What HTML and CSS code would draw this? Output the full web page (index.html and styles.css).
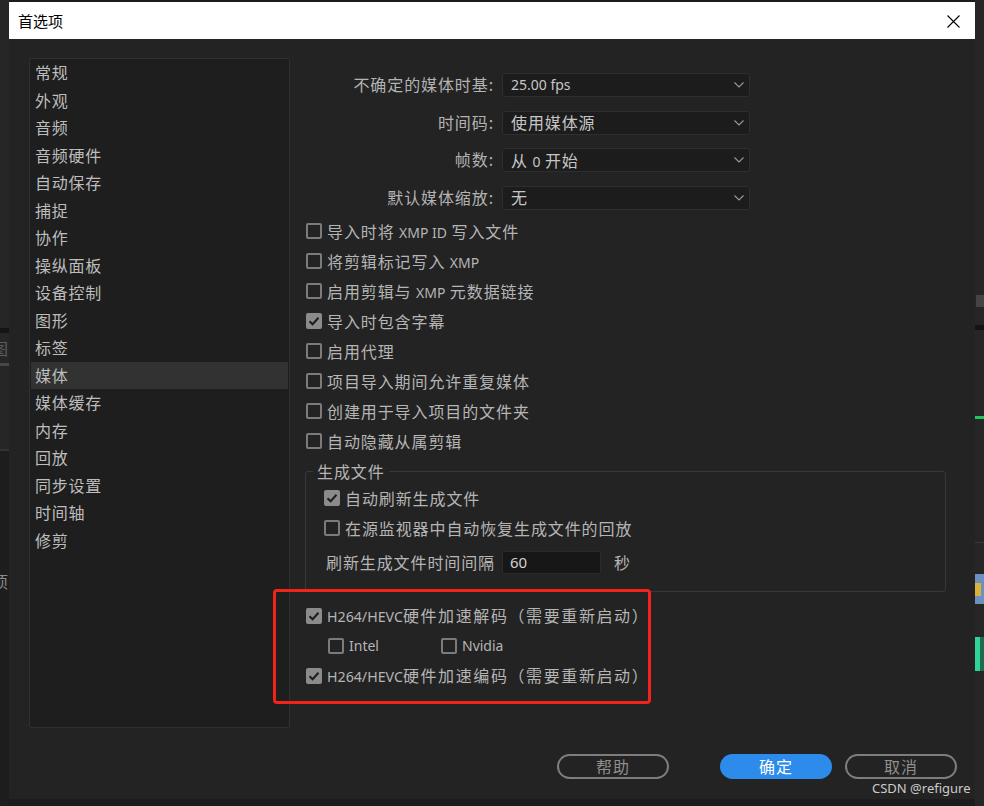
FILE: index.html
```html
<!DOCTYPE html>
<html>
<head>
<meta charset="utf-8">
<title>首选项</title>
<link rel="stylesheet" href="styles.css">
</head>
<body>
<div class="screen">
  <div class="strip strip-left">
    <div class="sp" style="height:328px"></div>
    <div class="band-dark"></div>
    <div class="sp glyph-row">图</div>
    <div class="line-gray"></div>
    <div class="sp" style="height:83px"></div>
    <div class="line-mid"></div>
    <div class="sp dark-area glyph-row2">项</div>
  </div>

  <div class="dialog">
    <div class="titlebar">
      <span class="title">首选项</span>
      <svg class="close" width="13" height="13" viewBox="0 0 13 13"><path d="M0.5 0.5 L12.5 12.5 M12.5 0.5 L0.5 12.5" stroke="#000" stroke-width="1.1" fill="none"/></svg>
    </div>
    <div class="dbody">
      <div class="main">
        <ul class="cats">
          <li>常规</li>
          <li>外观</li>
          <li>音频</li>
          <li>音频硬件</li>
          <li>自动保存</li>
          <li>捕捉</li>
          <li>协作</li>
          <li>操纵面板</li>
          <li>设备控制</li>
          <li>图形</li>
          <li>标签</li>
          <li class="sel">媒体</li>
          <li>媒体缓存</li>
          <li>内存</li>
          <li>回放</li>
          <li>同步设置</li>
          <li>时间轴</li>
          <li>修剪</li>
        </ul>

        <div class="pane">
          <div class="selects">
            <label>不确定的媒体时基:</label>
            <div class="select"><span class="en">25.00 fps</span><svg class="chev" width="10" height="6" viewBox="0 0 10 6"><path d="M0.5 0.5 L5 5 L9.5 0.5" stroke="#9a9a9a" stroke-width="1.1" fill="none"/></svg></div>
            <label>时间码:</label>
            <div class="select"><span>使用媒体源</span><svg class="chev" width="10" height="6" viewBox="0 0 10 6"><path d="M0.5 0.5 L5 5 L9.5 0.5" stroke="#9a9a9a" stroke-width="1.1" fill="none"/></svg></div>
            <label>帧数:</label>
            <div class="select"><span>从 <span class="en">0</span> 开始</span><svg class="chev" width="10" height="6" viewBox="0 0 10 6"><path d="M0.5 0.5 L5 5 L9.5 0.5" stroke="#9a9a9a" stroke-width="1.1" fill="none"/></svg></div>
            <label>默认媒体缩放:</label>
            <div class="select"><span>无</span><svg class="chev" width="10" height="6" viewBox="0 0 10 6"><path d="M0.5 0.5 L5 5 L9.5 0.5" stroke="#9a9a9a" stroke-width="1.1" fill="none"/></svg></div>
          </div>

          <div class="checks">
            <div class="row"><span class="cb"></span><span>导入时将 <span class="en">XMP ID</span> 写入文件</span></div>
            <div class="row"><span class="cb"></span><span>将剪辑标记写入 <span class="en">XMP</span></span></div>
            <div class="row"><span class="cb"></span><span>启用剪辑与 <span class="en">XMP</span> 元数据链接</span></div>
            <div class="row"><span class="cb on"><svg width="12" height="12" viewBox="0 0 12 12"><path d="M1.5 6.2 L4.6 9.2 L10.5 2.8" stroke="#1d1d1d" stroke-width="2" fill="none"/></svg></span><span>导入时包含字幕</span></div>
            <div class="row"><span class="cb"></span><span>启用代理</span></div>
            <div class="row"><span class="cb"></span><span>项目导入期间允许重复媒体</span></div>
            <div class="row"><span class="cb"></span><span>创建用于导入项目的文件夹</span></div>
            <div class="row"><span class="cb"></span><span>自动隐藏从属剪辑</span></div>
          </div>

          <fieldset class="group">
            <legend>生成文件</legend>
            <div class="row"><span class="cb on"><svg width="12" height="12" viewBox="0 0 12 12"><path d="M1.5 6.2 L4.6 9.2 L10.5 2.8" stroke="#1d1d1d" stroke-width="2" fill="none"/></svg></span><span>自动刷新生成文件</span></div>
            <div class="row"><span class="cb"></span><span>在源监视器中自动恢复生成文件的回放</span></div>
            <div class="interval">
              <span class="ilabel">刷新生成文件时间间隔</span>
              <span class="num en">60</span>
              <span class="unit">秒</span>
            </div>
          </fieldset>

          <div class="hw">
            <div class="row"><span class="cb on"><svg width="12" height="12" viewBox="0 0 12 12"><path d="M1.5 6.2 L4.6 9.2 L10.5 2.8" stroke="#1d1d1d" stroke-width="2" fill="none"/></svg></span><span><span class="en big">H264/HEVC</span><span class="wide">硬件加速解码（需要重新启动）</span></span></div>
            <div class="row sub">
              <span class="opt"><span class="cb"></span><span class="en">Intel</span></span>
              <span class="opt"><span class="cb"></span><span class="en">Nvidia</span></span>
            </div>
            <div class="row"><span class="cb on"><svg width="12" height="12" viewBox="0 0 12 12"><path d="M1.5 6.2 L4.6 9.2 L10.5 2.8" stroke="#1d1d1d" stroke-width="2" fill="none"/></svg></span><span><span class="en big">H264/HEVC</span><span class="wide">硬件加速编码（需要重新启动）</span></span></div>
          </div>
        </div>
      </div>

      <div class="footer">
        <button class="btn help">帮助</button>
        <button class="btn primary">确定</button>
        <button class="btn">取消</button>
      </div>
    </div>
  </div>

  <div class="strip strip-right">
    <div class="sp" style="height:295px"></div>
    <div class="r-gray"></div>
    <div class="sp" style="height:18px"></div>
    <div class="band-dark"></div>
    <div class="sp" style="height:86px"></div>
    <div class="r-green"></div>
    <div class="sp" style="height:123px"></div>
    <div class="r-line"></div>
    <div class="sp" style="height:31px"></div>
    <div class="r-blue"><span class="r-yellow"></span></div>
    <div class="sp" style="height:33px"></div>
    <div class="r-teal"></div>
  </div>
</div>

<div class="annot"></div>
<div class="watermark">CSDN @refigure</div>
</body>
</html>
```

FILE: styles.css
```css
* { box-sizing: border-box; }

body {
  margin: 0;
  width: 984px;
  height: 806px;
  overflow: hidden;
  position: relative;
  background: #1c1c1c;
  font-family: "Noto Sans CJK SC", "Noto Sans", sans-serif;
}

.screen {
  display: flex;
  height: 806px;
}

/* background application strips */
.strip {
  width: 9px;
  flex: none;
  display: flex;
  flex-direction: column;
  overflow: hidden;
}
.strip-left { background: #262626; }
.strip-right { background: #262626; }
.sp { flex: none; }
.band-dark { height: 5px; background: #141414; flex: none; }
.glyph-row {
  height: 30px;
  font-size: 16px;
  line-height: 30px;
  color: #5a5a5a;
  text-indent: -8px;
  white-space: nowrap;
}
.line-gray { height: 3px; background: #474747; flex: none; }
.line-mid { height: 2px; background: #333; flex: none; }
.dark-area {
  flex: 1;
  background: #1d1d1d;
  font-size: 16px;
  color: #8a8a8a;
  text-indent: -8px;
  padding-top: 118px;
  white-space: nowrap;
}
.r-gray { height: 12px; background: #444; margin-left: 1px; flex: none; }
.r-green { height: 3px; background: #1ec95a; flex: none; }
.r-line { height: 1px; background: #3a3a3a; flex: none; }
.r-blue {
  height: 30px;
  background: #6d8fc2;
  flex: none;
  display: flex;
  align-items: center;
}
.r-yellow {
  display: block;
  width: 6px;
  height: 13px;
  background: #d6b43a;
}
.r-teal { height: 34px; background: #1f6b4f; border-left: 5px solid #2fd394; flex: none; }

/* dialog */
.dialog {
  width: 966px;
  height: 797px;
  margin-top: 2px;
  background: #232323;
  display: flex;
  flex-direction: column;
  flex: none;
}

.titlebar {
  height: 37px;
  background: #ffffff;
  display: flex;
  align-items: center;
  justify-content: space-between;
  padding: 0 15px 0 9px;
  flex: none;
}
.title {
  font-size: 15px;
  color: #000;
  line-height: 20px;
}
.close { display: block; margin-top: 1px; }

.dbody {
  flex: 1;
  display: flex;
  flex-direction: column;
  padding: 19px 0 20px 20px;
}

.main {
  display: flex;
  height: 670px;
  flex: none;
}

.cats {
  list-style: none;
  margin: 0;
  padding: 0 1px;
  width: 261px;
  height: 670px;
  background: #1e1e1e;
  border: 1px solid #303030;
  border-radius: 2px;
  flex: none;
}
.cats li {
  height: 27.5px;
  line-height: 26px;
  padding-left: 4px;
  font-size: 16px;
  letter-spacing: 0.75px;
  color: #bdbdbd;
}
.cats li.sel { background: #323232; }

.pane {
  margin-left: 15px;
  padding-top: 15px;
  width: 641px;
}

.en {
  font-family: "Noto Sans", sans-serif;
  font-size: 14px;
  letter-spacing: 0;
}
.en.big { font-size: 14.2px; }
.wide { letter-spacing: 1.6px; }

.selects {
  display: grid;
  grid-template-columns: 189px 248px;
  grid-auto-rows: 24px;
  column-gap: 8px;
  row-gap: 13.5px;
}
.selects label {
  text-align: right;
  font-size: 16px;
  line-height: 22px;
  letter-spacing: 0.9px;
  color: #b3b3b3;
}
.select {
  background: #1c1c1c;
  border: 1px solid #2e2e2e;
  border-radius: 3px;
  display: flex;
  align-items: center;
  justify-content: space-between;
  padding: 0 5px 1px 8px;
  font-size: 16px;
  letter-spacing: 0.9px;
  color: #c6c6c6;
}
.chev { display: block; margin-top: 1px; }

.checks { margin-top: 6.5px; }

.row {
  height: 30px;
  display: flex;
  align-items: center;
  font-size: 16px;
  letter-spacing: 0.9px;
  color: #b5b5b5;
  white-space: nowrap;
}
.row > span:last-child { margin-top: -1px; }
.cb {
  width: 16px;
  height: 16px;
  flex: none;
  border: 2px solid #7b7b7b;
  border-radius: 2px;
  margin-left: 1px;
  margin-right: 5px;
  display: flex;
  align-items: center;
  justify-content: center;
}
.row > span.cb:last-child { margin-top: 0; }
.cb.on {
  background: #8b8b8b;
  border-color: #8b8b8b;
}
.cb svg { display: block; }

.group {
  margin: 6px 0 0;
  padding: 3px 0 17px 18px;
  width: 641px;
  border: 1px solid #383838;
  border-radius: 3px;
  min-width: 0;
}
.group legend {
  padding: 0 4px;
  margin-left: -11px;
  font-size: 16px;
  line-height: 18px;
  letter-spacing: 0.9px;
  color: #b5b5b5;
}
.group .cb { margin-left: 0; }

.interval {
  display: flex;
  align-items: center;
  height: 23px;
  margin-top: 7.5px;
  font-size: 16px;
  letter-spacing: 0.9px;
  color: #b5b5b5;
}
.ilabel {
  width: 178px;
  padding-left: 2px;
  flex: none;
}
.num {
  width: 99px;
  height: 23px;
  line-height: 21px;
  padding-left: 7px;
  background: #171717;
  border: 1px solid #2a2a2a;
  border-radius: 2px;
  color: #d2d2d2;
  font-size: 15px;
}
.unit { margin-left: 13px; }

.hw { margin-top: 9px; }
.row.sub { padding-left: 22px; }
.row.sub > .opt:last-child { margin-top: 0; }
.opt {
  width: 113px;
  display: flex;
  align-items: center;
}
.opt .en { margin-top: -1px; }

.footer {
  margin-top: 26px;
  height: 25px;
  display: flex;
  justify-content: flex-end;
  gap: 13px;
  padding-right: 18px;
  flex: none;
}
.btn {
  width: 112px;
  height: 25px;
  border: 2px solid #7d7d7d;
  border-radius: 13px;
  background: transparent;
  color: #8f8f8f;
  font-family: "Noto Sans CJK SC", sans-serif;
  font-size: 16px;
  line-height: 19px;
  letter-spacing: 0.9px;
  padding: 0 0 1px;
}
.btn.help { margin-right: 38px; }
.btn.primary {
  background: #2d8ceb;
  border-color: #2d8ceb;
  color: #ffffff;
}

/* red annotation rectangle over the screenshot */
.annot {
  position: absolute;
  left: 273px;
  top: 589px;
  width: 378px;
  height: 115px;
  border: 3px solid #f2231b;
  border-radius: 4px;
}

.watermark {
  position: absolute;
  left: 872px;
  top: 779px;
  font-family: "Noto Sans", sans-serif;
  font-size: 13px;
  line-height: 18px;
  color: #cccccc;
}
```
